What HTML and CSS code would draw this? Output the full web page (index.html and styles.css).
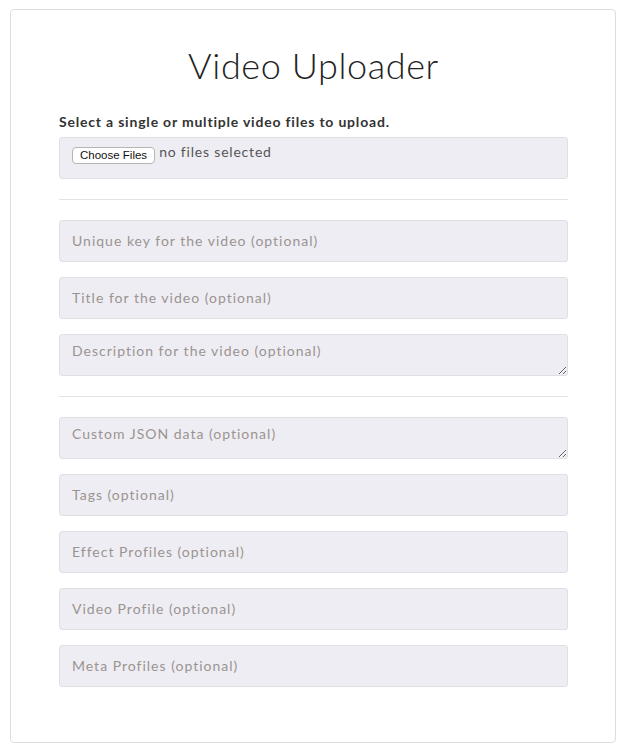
FILE: index.html
```html
<!DOCTYPE html>
<html lang="en">
<head>
    <meta charset="UTF-8">
    <meta name="viewport" content="width=device-width, initial-scale=1.0">
    <title>Video Uploader</title>
    <link rel="stylesheet" href="styles.css">
</head>
<body>
    <div class="container">
        <h1>Video Uploader</h1>
        <form action="/upload" method="post" enctype="multipart/form-data">
            <div class="form-group">
                <label class="file-label" for="files">Select a single or multiple video files to upload.</label>
                <div class="file-box">
                    <label class="file-btn">Choose Files<input type="file" id="files" name="files" multiple></label>
                    <span class="file-status">no files selected</span>
                </div>
            </div>
            <hr>
            <div class="form-group">
                <input type="text" name="key" placeholder="Unique key for the video (optional)">
            </div>
            <div class="form-group">
                <input type="text" name="title" placeholder="Title for the video (optional)">
            </div>
            <div class="form-group">
                <textarea name="description" placeholder="Description for the video (optional)"></textarea>
            </div>
            <hr>
            <div class="form-group">
                <textarea name="custom" placeholder="Custom JSON data (optional)"></textarea>
            </div>
            <div class="form-group">
                <input type="text" name="tags" placeholder="Tags (optional)">
            </div>
            <div class="form-group">
                <input type="text" name="effects" placeholder="Effect Profiles (optional)">
            </div>
            <div class="form-group">
                <input type="text" name="video_profile" placeholder="Video Profile (optional)">
            </div>
            <div class="form-group">
                <input type="text" name="meta_profiles" placeholder="Meta Profiles (optional)">
            </div>
        </form>
    </div>
</body>
</html>
```

FILE: styles.css
```css
body {
    font-family: Lato, "Open Sans", sans-serif;
    margin: 0;
    padding: 0;
    background-color: #fff;
    color: #333;
}
.container {
    margin: 9px 9px 0 10px;
    padding: 0 47px 40px 48px;
    border: 1px solid #ddd;
    border-radius: 4px;
}
h1 {
    text-align: center;
    font-weight: 300;
    font-size: 36px;
    line-height: 43px;
    letter-spacing: 0.6px;
    color: #222;
    margin: 34px 0 26px;
}
.form-group {
    margin-bottom: 15px;
}
.file-label {
    display: block;
    font-size: 14px;
    font-weight: 700;
    line-height: 18px;
    letter-spacing: 0.8px;
    margin-bottom: 6px;
}
.file-box {
    display: flex;
    align-items: flex-start;
    height: 42px;
    padding: 9px 12px 0;
    box-sizing: border-box;
    background-color: #efedf4;
    border: 1px solid #e0dfe4;
    border-radius: 3px;
}
.file-btn {
    display: inline-block;
    font-family: "Liberation Sans", Arial, sans-serif;
    font-size: 11.5px;
    line-height: 15px;
    padding: 0 7px;
    background-color: #fff;
    border: 1px solid #b5b5b5;
    border-radius: 4px;
    color: #111;
}
.file-btn input {
    display: none;
}
.file-status {
    font-size: 14px;
    line-height: 16px;
    margin: -3px 0 0 4px;
    color: #555;
    letter-spacing: 0.8px;
}
hr {
    border: none;
    border-top: 1px solid #e3e3e3;
    margin: 20px 0;
}
input[type="text"],
textarea {
    display: block;
    width: 100%;
    height: 42px;
    padding: 9px 12px 11px;
    box-sizing: border-box;
    font-family: Lato, "Open Sans", sans-serif;
    font-size: 14px;
    line-height: 20px;
    letter-spacing: 1px;
    color: #333;
    background-color: #efedf4;
    border: 1px solid #e0dfe4;
    border-radius: 3px;
}
textarea {
    padding-top: 6px;
    resize: vertical;
}
input[type="text"]::placeholder,
textarea::placeholder {
    color: #9a9490;
}
```
